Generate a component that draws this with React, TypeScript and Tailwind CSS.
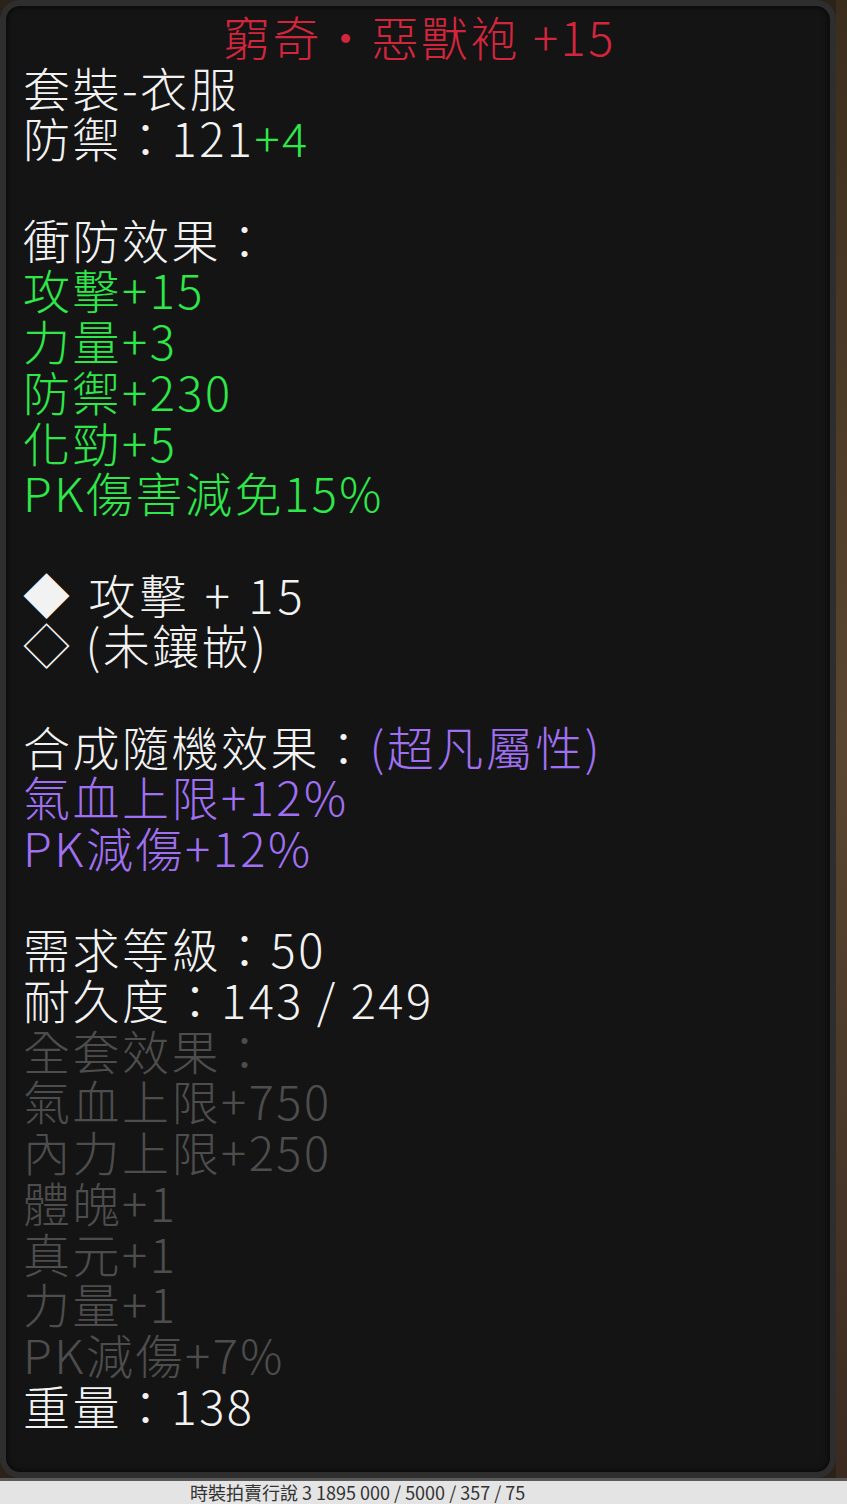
import React from 'react';

type Seg = { t: string; c: string };
type Line = Seg[] | null;

const W = 'text-[#f2f2f2]';
const G = 'text-[#2ee84a]';
const P = 'text-[#a070f2]';
const D = 'text-[#4d4d4d]';

const LINES: Line[] = [
  [{ t: '套裝-衣服', c: W }],
  [{ t: '防禦：121', c: W }, { t: '+4', c: G }],
  null,
  [{ t: '衝防效果：', c: W }],
  [{ t: '攻擊+15', c: G }],
  [{ t: '力量+3', c: G }],
  [{ t: '防禦+230', c: G }],
  [{ t: '化勁+5', c: G }],
  [{ t: 'PK傷害減免15%', c: G }],
  null,
  [{ t: '◆ 攻擊 + 15', c: `${W} tracking-[4px]` }],
  [{ t: '◇ (未鑲嵌)', c: W }],
  null,
  [{ t: '合成隨機效果：', c: W }, { t: '(超凡屬性)', c: P }],
  [{ t: '氣血上限+12%', c: P }],
  [{ t: 'PK減傷+12%', c: P }],
  null,
  [{ t: '需求等級：50', c: W }],
  [{ t: '耐久度：143 / 249', c: W }],
  [{ t: '全套效果：', c: D }],
  [{ t: '氣血上限+750', c: D }],
  [{ t: '內力上限+250', c: D }],
  [{ t: '體魄+1', c: D }],
  [{ t: '真元+1', c: D }],
  [{ t: '力量+1', c: D }],
  [{ t: 'PK減傷+7%', c: D }],
  [{ t: '重量：138', c: W }],
];

export default function App() {
  return (
    <div
      className="w-[847px] h-[1504px] bg-[#2b2219] flex flex-col overflow-hidden"
      style={{ fontFamily: '"Noto Sans CJK TC", "Noto Sans CJK SC", sans-serif' }}
    >
      <div className="flex h-[1478px]">
        <div className="w-[836px] h-full rounded-[20px] border-[6px] border-[#2e2e2e] bg-[#141414] shadow-[inset_0_0_6px_rgba(0,0,0,0.8)] pl-[17px] pt-[5px] text-[47px] leading-[50.7px] tracking-[2.5px] whitespace-pre font-light">
          <div className="h-[50.7px] text-center text-[#d3263d] pr-[14px]">
            <span className="inline-block leading-[50.7px]">窮奇・惡獸袍 +15</span>
          </div>
          {LINES.map((line, i) => (
            <div key={i} className="h-[50.7px]">
              {line?.map((s, j) => (
                <span key={j} className={`inline-block leading-[50.7px] ${s.c}`}>
                  {s.t}
                </span>
              ))}
            </div>
          ))}
        </div>
        <div className="flex-1 bg-gradient-to-b from-[#3b2d1c] via-[#5a4630] to-[#3a2a20]" />
      </div>
      <div className="flex-1 bg-[#e4e4e4] border-t-[3px] border-[#5a5a5a] overflow-hidden">
        <div className="ml-[190px] mt-[1px] text-[18px] leading-[20px] text-[#333] whitespace-nowrap">
          時裝拍賣行說 3 1895 000 / 5000 / 357 / 75
        </div>
      </div>
    </div>
  );
}
